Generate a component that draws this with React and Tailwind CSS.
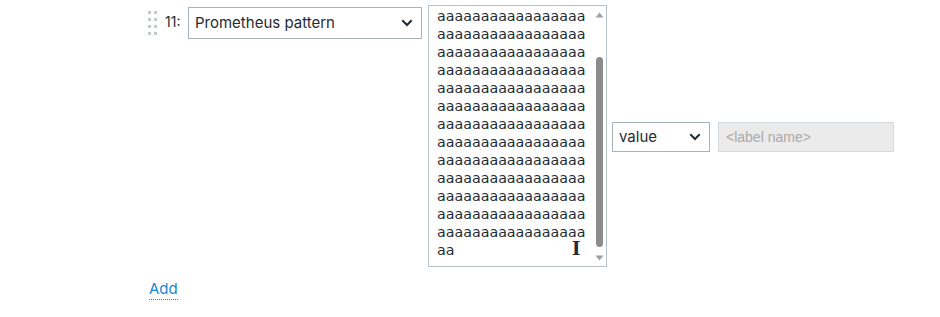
import React from "react";

const Chevron = () => (
  <svg width="12" height="8" viewBox="0 0 12 8" className="shrink-0">
    <path d="M2 2 L6 6 L10 2" fill="none" stroke="#1f2c33" strokeWidth="2" strokeLinecap="square" />
  </svg>
);

const lines = Array.from({ length: 13 }, () => "aaaaaaaaaaaaaaaaa").concat(["aa"]);

export default function App() {
  return (
    <div className="w-[940px] h-[317px] bg-white font-['Inter',sans-serif] text-[#1f2c33] relative">
      <div className="flex items-start pl-[148px] pt-[5px]">
        <div className="grid grid-cols-2 gap-x-[3px] gap-y-[4px] mt-[6px] w-[9px]">
          {Array.from({ length: 8 }).map((_, i) => (
            <div key={i} className="w-[3px] h-[3px] bg-[#c4c9cc]" />
          ))}
        </div>
        <div className="ml-[8px] mt-[8px] text-[14px] leading-[18px] w-[23px]">11:</div>
        <div className="mt-[2px] w-[234px] h-[32px] border border-[#a6b3bb] flex items-center justify-between pl-[6px] pr-[8px] text-[15px]">
          <span>Prometheus pattern</span>
          <Chevron />
        </div>
        <div className="ml-[6px] w-[179px] h-[262px] border border-[#b7c1c7] relative overflow-hidden">
          <div className="pl-[8px] pt-[1px] font-['DejaVu_Sans',sans-serif] text-[14.25px] leading-[18px] text-[#1f2c33] whitespace-nowrap">
            {lines.map((l, i) => (
              <div key={i}>{l}</div>
            ))}
          </div>
          <div className="absolute right-0 top-0 bottom-0 w-[13px] bg-white">
            <svg width="13" height="12" viewBox="0 0 13 12" className="absolute top-[3px] left-0">
              <path d="M2.5 8.5 L6.5 3.5 L10.5 8.5 Z" fill="#a0a0a0" />
            </svg>
            <div className="absolute left-[3px] w-[7px] top-[51px] h-[190px] rounded-full bg-[#8c8c8c]" />
            <svg width="13" height="12" viewBox="0 0 13 12" className="absolute bottom-[2px] left-0">
              <path d="M2.5 3.5 L6.5 8.5 L10.5 3.5 Z" fill="#a0a0a0" />
            </svg>
          </div>
          <div className="absolute left-[143px] top-[234px] text-[#1f2c33] text-[18px] leading-none font-bold font-['DejaVu_Serif',serif]">I</div>
        </div>
        <div className="self-center flex items-center ml-[5px] mt-[1px]">
          <div className="w-[98px] h-[30px] border border-[#a6b3bb] flex items-center justify-between pl-[6px] pr-[8px] text-[15px]">
            <span className="mt-[2px]">value</span>
            <Chevron />
          </div>
          <div className="ml-[8px] w-[176px] h-[30px] border border-[#d3d9dc] bg-[#ebebeb] flex items-center pl-[7px] text-[14px] text-[#a9a9a9] font-['Liberation_Sans',sans-serif]">
            <span className="mt-[2px]">&lt;label name&gt;</span>
          </div>
        </div>
      </div>
      <div className="pl-[149px] mt-[9px]">
        <span className="text-[15px] leading-[18px] text-[#1a86cf] border-b border-dotted border-[#1a86cf] pb-[1px]">Add</span>
      </div>
    </div>
  );
}
